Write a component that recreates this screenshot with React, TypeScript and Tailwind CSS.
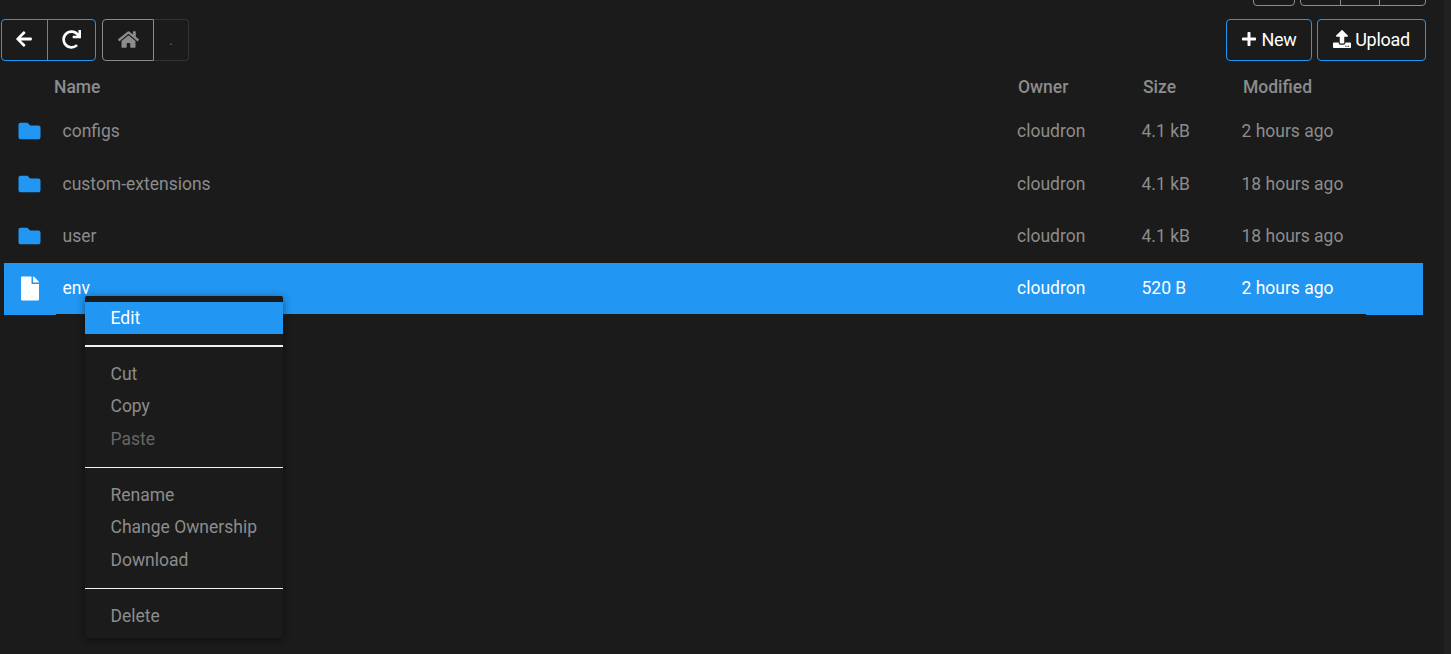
import React from "react";
import { FaArrowLeft, FaRedo, FaHome, FaPlus, FaUpload, FaFolder, FaFile } from "react-icons/fa";

const rows = [
  { name: "configs", owner: "cloudron", size: "4.1 kB", mod: "2 hours ago", cls: "h-[53px] pb-px" },
  { name: "custom-extensions", owner: "cloudron", size: "4.1 kB", mod: "18 hours ago", cls: "h-[52px]" },
  { name: "user", owner: "cloudron", size: "4.1 kB", mod: "18 hours ago", cls: "h-[52px]" },
];

function Sep({ thick }: { thick?: boolean }) {
  return (
    <div
      className={
        thick
          ? "h-[2px] bg-[#f2f2f2] mt-[11px] mb-[9.75px]"
          : "h-px bg-[#f2f2f2] mt-[12.75px] mb-[9.75px]"
      }
    />
  );
}

function Item({ label, dim }: { label: string; dim?: boolean }) {
  return (
    <div className={`h-[32.5px] pl-[25.5px] pt-[2px] flex items-center ${dim ? "text-[#666666]" : "text-[#8c8c8c]"}`}>
      {label}
    </div>
  );
}

export default function App() {
  return (
    <div
      className="relative w-[1451px] h-[654px] overflow-hidden bg-[#1b1b1b] text-[17.5px] text-[#8c8c8c]"
      style={{ fontFamily: "Roboto, sans-serif" }}
    >
      {/* cut-off buttons at top */}
      <div className="h-[6.5px] overflow-hidden flex justify-end gap-[5px] pr-[25px]">
        <div className="w-[42px] h-[42px] -mt-[36px] border border-[#8c8c8c] rounded-[4px]" />
        <div className="w-[126px] h-[42px] -mt-[36px] border border-[#8c8c8c] rounded-[4px] flex">
          <div className="w-[40px] border-r border-[#8c8c8c]" />
          <div className="w-[39px] border-r border-[#8c8c8c]" />
        </div>
      </div>

      {/* toolbar */}
      <div className="mt-[12.5px] h-[42px] flex justify-between pl-px pr-[25px]">
        <div className="flex gap-[6px]">
          <div className="flex w-[95px] border border-[#2196f3] rounded-[4px] text-white">
            <div className="w-[46px] border-r border-[#2196f3] flex items-center justify-center pb-[2px] pr-px">
              <FaArrowLeft className="w-[18px] h-[18px]" />
            </div>
            <div className="flex-1 flex items-center justify-center pb-[2px]">
              <FaRedo className="w-[19px] h-[19px]" />
            </div>
          </div>
          <div className="flex w-[87px]">
            <div className="w-[52px] border border-[#8c8c8c] rounded-l-[4px] flex items-center justify-center text-[#8c8c8c] pb-[2px]">
              <FaHome className="w-[21px] h-[21px]" />
            </div>
            <div className="flex-1 border border-l-0 border-[#333333] rounded-r-[4px] flex items-center justify-center text-[#666666] text-[15px]">
              .
            </div>
          </div>
        </div>
        <div className="flex gap-[5px] text-white text-[18px]">
          <div className="w-[86px] border border-[#2196f3] rounded-[4px] flex items-center justify-center gap-[4px] pb-[2px]">
            <FaPlus className="w-[16px] h-[16px]" />
            <span className="tracking-[-0.3px]">New</span>
          </div>
          <div className="w-[109px] border border-[#2196f3] rounded-[4px] flex items-center justify-center gap-[4px] pb-[2px]">
            <FaUpload className="w-[18px] h-[18px]" />
            <span className="tracking-[-0.3px]">Upload</span>
          </div>
        </div>
      </div>

      {/* header */}
      <div className="mt-[13px] h-[26px] flex items-center font-medium text-[#8c8c8c] pl-[54px]">
        <div className="w-[964px]">Name</div>
        <div className="w-[125px]">Owner</div>
        <div className="w-[100px]">Size</div>
        <div>Modified</div>
      </div>

      {/* rows */}
      <div className="mt-[5px]">
        {rows.map((r) => (
          <div key={r.name} className={`${r.cls} flex items-center pl-[4px]`}>
            <div className="w-[58.5px] pl-[14px] text-[#2196f3]">
              <FaFolder className="w-[25px] h-[22px] -ml-px" />
            </div>
            <div className="w-[954.5px]">{r.name}</div>
            <div className="w-[124.5px]">{r.owner}</div>
            <div className="w-[100px]">{r.size}</div>
            <div>{r.mod}</div>
          </div>
        ))}
        <div className="flex items-start w-[1419px] ml-[4px] mt-px text-white">
          <div className="w-[52px] h-[52px] bg-[#2196f3] pl-[17px] flex items-center pb-[2px]">
            <FaFile className="w-[18px] h-[25px]" />
          </div>
          <div className="w-[1310px] h-[51px] bg-[#2196f3] flex items-center pl-[6.5px] pb-px">
            <div className="w-[954.5px]">env</div>
            <div className="w-[124.5px]">cloudron</div>
            <div className="w-[100px]">520 B</div>
            <div>2 hours ago</div>
          </div>
          <div className="w-[57px] h-[52px] bg-[#2196f3]" />
        </div>
      </div>

      {/* context menu */}
      <div className="absolute left-[85px] top-[296px] w-[198px] h-[342px] bg-[#1b1b1b] rounded-[2px] pt-[6px] shadow-[0_2px_8px_rgba(0,0,0,0.45)]">
        <div className="h-[32px] bg-[#2196f3] text-white pl-[25.5px] flex items-center">Edit</div>
        <Sep thick />
        <Item label="Cut" />
        <Item label="Copy" />
        <Item label="Paste" dim />
        <Sep />
        <Item label="Rename" />
        <Item label="Change Ownership" />
        <Item label="Download" />
        <Sep />
        <Item label="Delete" />
      </div>

      {/* right page edge */}
      <div className="absolute right-0 top-0 w-[7px] h-full bg-[#212121]" />
    </div>
  );
}
